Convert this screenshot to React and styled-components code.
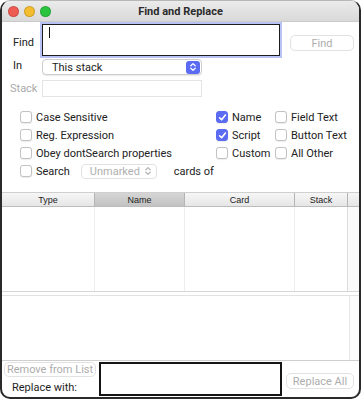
import React from 'react';
import styled, { createGlobalStyle } from 'styled-components';

const GlobalStyle = createGlobalStyle`
body{
  margin:0;
  background:#fff;
}
`;

const Window = styled.div`
width:361px;
height:399px;
box-sizing:border-box;
border:2px solid #2a2a2a;
border-top:1px solid #b8b8b8;
border-radius:10px;
overflow:hidden;
display:flex;
flex-direction:column;
background:#fff;
font-family:Roboto, "Liberation Sans", sans-serif;
font-size:11px;
color:#222;
`;

const TitleBar = styled.div`
flex:none;
height:20px;
display:grid;
grid-template-columns:1fr auto 1fr;
align-items:center;
background:linear-gradient(#ebebeb, #d9d9d9);
border-bottom:1px solid #cbcbcb;
`;

const Lights = styled.div`
display:flex;
gap:5px;
padding-left:6px;
`;

const Light = styled.span`
width:11px;
height:11px;
border-radius:50%;
box-sizing:border-box;
background:${({c}) => c};
border:0.5px solid rgba(0,0,0,0.15);
`;

const Title = styled.div`
font-weight:700;
font-size:11px;
color:#2b2b2b;
`;

const Form = styled.div`
flex:none;
padding-left:11px;
`;

const Row = styled.div`
display:flex;
align-items:${({top}) => (top ? 'flex-start' : 'center')};
margin-top:${({mt}) => mt}px;
`;

const Label = styled.span`
width:${({w}) => w || 29}px;
margin-left:${({ml}) => ml || 0}px;
margin-top:${({mt}) => mt || 0}px;
color:${({dim}) => (dim ? '#aaa' : '#222')};
line-height:13px;
`;

const FindField = styled.div`
width:238px;
height:32px;
box-sizing:border-box;
border:1.5px solid #1c1c1c;
box-shadow:0 0 0 2px #b8c2f4;
background:#fff;
padding:2px 0 0 6px;
`;

const Caret = styled.div`
width:1px;
height:11px;
background:#111;
`;

const Button = styled.div`
width:${({w}) => w}px;
height:${({h}) => h || 16}px;
margin-left:${({ml}) => ml || 0}px;
margin-top:${({mt}) => mt || 0}px;
box-sizing:border-box;
border:1px solid #e2e2e2;
border-radius:5px;
background:#fff;
color:#adadad;
display:flex;
align-items:center;
justify-content:center;
white-space:nowrap;
font-size:11px;
`;

const Select = styled.div`
width:${({w}) => w}px;
height:${({h}) => h}px;
margin-left:${({ml}) => ml || 0}px;
box-sizing:border-box;
border:1px solid ${({disabled}) => (disabled ? '#e2e2e2' : '#cdcdcd')};
border-radius:4px;
box-shadow:${({disabled}) => (disabled ? 'none' : '0 1px 1px rgba(0,0,0,0.08)')};
display:flex;
align-items:center;
justify-content:space-between;
padding:0 1px 0 ${({pl}) => pl}px;
color:${({disabled}) => (disabled ? '#b0b0b0' : '#222')};
background:#fff;
`;

const Stepper = styled.div`
width:14px;
height:13px;
border-radius:3px;
background:${({disabled}) => (disabled ? 'transparent' : '#5b6cf2')};
display:flex;
align-items:center;
justify-content:center;
`;

const StackField = styled.div`
width:160px;
height:17px;
box-sizing:border-box;
border:1px solid #e4e4e4;
background:#fff;
`;

const Options = styled.div`
display:grid;
grid-template-columns:196px 59px 1fr;
grid-auto-rows:18px;
margin-top:11px;
padding-left:18px;
`;

const Option = styled.div`
display:flex;
align-items:center;
white-space:nowrap;
overflow:hidden;
`;

const Box = styled.span`
flex:none;
width:12px;
height:12px;
box-sizing:border-box;
border-radius:3px;
margin-right:4px;
display:flex;
align-items:center;
justify-content:center;
border:1px solid ${({on}) => (on ? '#5b6cf2' : '#c2c2c2')};
background:${({on}) => (on ? '#5b6cf2' : '#fff')};
box-shadow:0 0.5px 1px rgba(0,0,0,0.08);
`;

const Trail = styled.span`
margin-left:17px;
`;

const Table = styled.div`
flex:none;
margin-top:12px;
`;

const Columns = `
display:grid;
grid-template-columns:93px 90px 110px 53px 1fr;
`;

const Header = styled.div`
${Columns}
height:15px;
box-sizing:border-box;
border-top:1px solid #cfcfcf;
border-bottom:1px solid #bcbcbc;
background:linear-gradient(#f6f6f6, #e6e6e6);
font-family:"Liberation Sans", Arial, sans-serif;
font-size:9px;
color:#222;
`;

const HeadCell = styled.div`
display:flex;
align-items:center;
justify-content:center;
border-right:1px solid #b4b4b4;
background:${({sel}) => (sel ? 'linear-gradient(#d6d6d6, #c2c2c2)' : 'transparent')};
&:last-child{ border-right:none; }
`;

const Body = styled.div`
${Columns}
height:85px;
box-sizing:border-box;
border-bottom:1px solid #d6d6d6;
`;

const BodyCell = styled.div`
border-right:1px solid ${({edge}) => (edge ? '#dcdcdc' : '#ededed')};
background:${({scroll}) => (scroll ? '#fafafa' : '#fff')};
&:last-child{ border-right:none; }
`;

const Panel = styled.div`
flex:none;
margin-top:3px;
height:66px;
box-sizing:border-box;
border-top:1px solid #e2e2e2;
border-bottom:1px solid #cfcfcf;
display:grid;
grid-template-columns:1fr 10px;
`;

const Track = styled.div`
border-left:1px solid #e6e6e6;
background:#fbfbfb;
`;

const Bottom = styled.div`
flex:1;
display:flex;
align-items:flex-start;
padding-left:2px;
`;

const BottomLeft = styled.div`
width:92px;
display:flex;
flex-direction:column;
padding-top:1px;
`;

const ReplaceLabel = styled.span`
margin:4px 0 0 8px;
line-height:13px;
color:#1e1e1e;
`;

const ReplaceField = styled.div`
width:183px;
height:34px;
margin:1px 0 0 3px;
box-sizing:border-box;
border:2px solid #151515;
background:#fff;
`;

const Chevrons = ({color}) => (
    <svg width="8" height="10" viewBox="0 0 8 10" fill="none" stroke={color} strokeWidth="1.3" strokeLinecap="round" strokeLinejoin="round">
        <path d="M1.8 3.8 L4 1.6 L6.2 3.8" />
        <path d="M1.8 6.2 L4 8.4 L6.2 6.2" />
    </svg>
);

const Check = () => (
    <svg width="9" height="9" viewBox="0 0 9 9" fill="none" stroke="#fff" strokeWidth="1.6" strokeLinecap="round" strokeLinejoin="round">
        <path d="M1.6 4.8 L3.6 6.8 L7.4 2" />
    </svg>
);

const CheckOption = ({label, on}) => (
    <Option>
        <Box on={on}>{on && <Check />}</Box>
        {label}
    </Option>
);

const App = () => {
    return (
        <>
            <GlobalStyle />
            <Window>
                <TitleBar>
                    <Lights>
                        <Light c="#ee5b53" />
                        <Light c="#f4bd30" />
                        <Light c="#2ac43f" />
                    </Lights>
                    <Title>Find and Replace</Title>
                    <span />
                </TitleBar>
                <Form>
                    <Row top mt={2}>
                        <Label mt={12}>Find</Label>
                        <FindField><Caret /></FindField>
                        <Button w={64} ml={10} mt={11}>Find</Button>
                    </Row>
                    <Row mt={3}>
                        <Label mt={-4}>In</Label>
                        <Select w={160} h={16} pl={9}>
                            This stack
                            <Stepper><Chevrons color="#fff" /></Stepper>
                        </Select>
                    </Row>
                    <Row mt={5}>
                        <Label w={32} ml={-3} dim>Stack</Label>
                        <StackField />
                    </Row>
                </Form>
                <Options>
                    <CheckOption label="Case Sensitive" />
                    <CheckOption label="Name" on />
                    <CheckOption label="Field Text" />
                    <CheckOption label="Reg. Expression" />
                    <CheckOption label="Script" on />
                    <CheckOption label="Button Text" />
                    <CheckOption label="Obey dontSearch properties" />
                    <CheckOption label="Custom" />
                    <CheckOption label="All Other" />
                    <Option>
                        <Box />
                        Search
                        <Select w={76} h={15} pl={8} ml={11} disabled>
                            Unmarked
                            <Stepper disabled><Chevrons color="#b5b5b5" /></Stepper>
                        </Select>
                        <Trail>cards of</Trail>
                    </Option>
                </Options>
                <Table>
                    <Header>
                        <HeadCell>Type</HeadCell>
                        <HeadCell sel>Name</HeadCell>
                        <HeadCell>Card</HeadCell>
                        <HeadCell>Stack</HeadCell>
                        <HeadCell />
                    </Header>
                    <Body>
                        <BodyCell />
                        <BodyCell />
                        <BodyCell />
                        <BodyCell edge />
                        <BodyCell scroll />
                    </Body>
                </Table>
                <Panel>
                    <div />
                    <Track />
                </Panel>
                <Bottom>
                    <BottomLeft>
                        <Button w={92} h={15}>Remove from List</Button>
                        <ReplaceLabel>Replace with:</ReplaceLabel>
                    </BottomLeft>
                    <ReplaceField />
                    <Button w={68} ml={4} mt={12}>Replace All</Button>
                </Bottom>
            </Window>
        </>
    );
};

export default App;
